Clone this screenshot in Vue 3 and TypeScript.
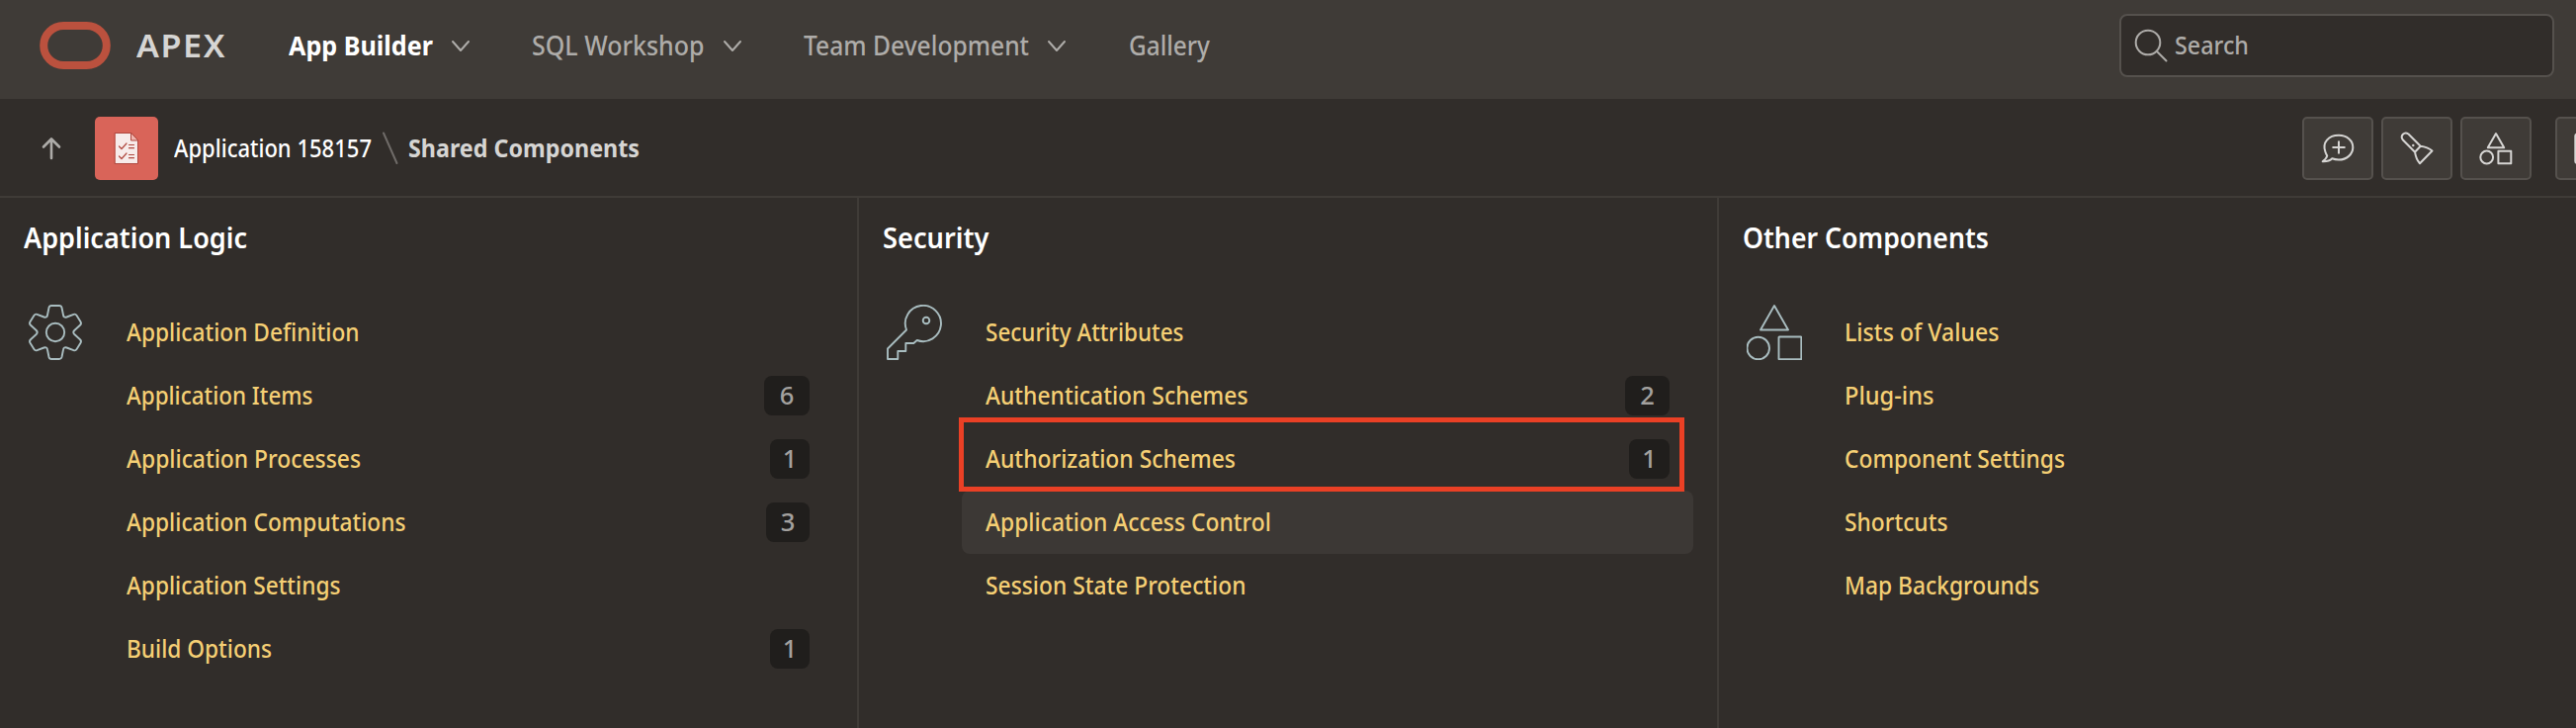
<script setup lang="ts">
interface Label { text: string; width: number }
interface NavItem extends Label { menu: boolean; active?: boolean }
interface LinkItem extends Label { count?: number; badge?: number; marked?: boolean; hovered?: boolean }
interface Section extends Label { icon: 'gear' | 'key' | 'shapes'; links: LinkItem[] }

// Condenses a label horizontally so that it fills the given width.
const vFit = {
  mounted(el: HTMLElement, binding: { value: number }) {
    const natural = el.getBoundingClientRect().width
    el.style.width = `${binding.value}px`
    el.style.transform = `scaleX(${binding.value / natural})`
  },
}

const nav: NavItem[] = [
  { text: 'App Builder', width: 146, menu: true, active: true },
  { text: 'SQL Workshop', width: 174.5, menu: true },
  { text: 'Team Development', width: 228, menu: true },
  { text: 'Gallery', width: 82, menu: false },
]

const sections: Section[] = [
  {
    text: 'Application Logic', width: 226, icon: 'gear',
    links: [
      { text: 'Application Definition', width: 235.5 },
      { text: 'Application Items', width: 188.5, count: 6, badge: 46 },
      { text: 'Application Processes', width: 237, count: 1, badge: 40 },
      { text: 'Application Computations', width: 282.5, count: 3, badge: 44 },
      { text: 'Application Settings', width: 216.5 },
      { text: 'Build Options', width: 147, count: 1, badge: 40 },
    ],
  },
  {
    text: 'Security', width: 107.5, icon: 'key',
    links: [
      { text: 'Security Attributes', width: 200.5 },
      { text: 'Authentication Schemes', width: 265.5, count: 2, badge: 45 },
      { text: 'Authorization Schemes', width: 253, count: 1, badge: 41, marked: true },
      { text: 'Application Access Control', width: 289, hovered: true },
      { text: 'Session State Protection', width: 263.5 },
    ],
  },
  {
    text: 'Other Components', width: 249, icon: 'shapes',
    links: [
      { text: 'Lists of Values', width: 156.5 },
      { text: 'Plug-ins', width: 90.5 },
      { text: 'Component Settings', width: 223 },
      { text: 'Shortcuts', width: 104.5 },
      { text: 'Map Backgrounds', width: 197 },
    ],
  },
]
</script>

<template>
  <div class="page">
    <header class="header">
      <svg class="logo" width="72" height="48" viewBox="0 0 72 48"><rect x="4.200" y="4" width="63.600" height="40" rx="20" /></svg>
      <span class="brand"><span v-fit="91" class="fit">APEX</span></span>
      <nav class="nav">
        <a v-for="item in nav" :key="item.text" class="nav-item" :class="{ active: item.active }">
          <span v-fit="item.width" class="fit">{{ item.text }}</span>
          <svg v-if="item.menu" class="chevron" width="20" height="14" viewBox="0 0 20 14"><path d="M2 2l8 9 8-9" /></svg>
        </a>
      </nav>
      <div class="search">
        <svg width="36" height="36" viewBox="0 0 36 36"><circle cx="15" cy="15" r="12.3" /><path d="M24 24l9.5 9.5" /></svg>
        <span v-fit="75" class="fit">Search</span>
      </div>
    </header>

    <div class="bar">
      <svg class="up" width="22" height="24" viewBox="0 0 22 24"><path d="M11 22V3M3 10.5L11 2.5l8 8" /></svg>
      <div class="tile">
        <svg width="64" height="64" viewBox="0 0 64 64">
          <path class="sheet" d="M20.500 16.500H36.500L43.500 24V47.500H20.500Z" />
          <path class="fold" d="M36.500 16.500V24H43.500Z" />
          <path class="ticks" d="M24.500 30l2.500 2.500 5-5.500M24.500 40l2.500 2.500 5-5.500M34.500 28.500h5M34.500 31.700h5M34.500 38.500h5M34.500 41.700h5" />
        </svg>
      </div>
      <span class="crumb"><span v-fit="200" class="fit">Application 158157</span></span>
      <svg class="slash" width="18" height="34" viewBox="0 0 18 34"><path d="M2 1.500L15.500 32" /></svg>
      <span class="crumb current"><span v-fit="234" class="fit">Shared Components</span></span>
      <div class="tools">
        <button class="tool">
          <svg width="72" height="64" viewBox="0 0 72 64"><path d="M23.400 35.500C20 26 26.500 18.800 37 18.800C45 18.800 51.300 24 51.300 31S45 43.500 37 43.500C34.500 43.500 32.500 43.200 30.300 42.300C28 44.600 25 45.500 20.700 45.300C23.500 43 24.900 41 25.200 39.600C24.300 38 23.900 37 23.400 35.500ZM37 25.300v11.500M31.200 31h11.600" /></svg>
        </button>
        <button class="tool">
          <svg width="72" height="64" viewBox="0 0 72 64"><path d="M34 35.700L21.700 23.300C18.800 19 23.300 14.800 27.500 17.500L39.700 29.700ZM39.700 29.700C44 30.200 48 31.500 51.500 34.500L39 47.300C35.500 43.500 34.600 39.500 34 35.700" /><circle class="dot" cx="32.300" cy="29" r="1.200" /></svg>
        </button>
        <button class="tool">
          <svg width="72" height="64" viewBox="0 0 72 64"><path d="M36 17l8.200 14.300H27.800ZM38.400 34.700h12.900v12.600H38.400Z" /><circle cx="26.700" cy="41" r="6.400" /></svg>
        </button>
        <button class="tool last">
          <svg width="72" height="64" viewBox="0 0 72 64"><rect x="20.300" y="17.500" width="32" height="29.500" rx="2" /></svg>
        </button>
      </div>
    </div>

    <main class="columns">
      <section v-for="section in sections" :key="section.text" class="column">
        <h2 class="title"><span v-fit="section.width" class="fit">{{ section.text }}</span></h2>
        <div class="body">
          <svg class="icon" width="56" height="56" viewBox="0 0 56 56">
            <template v-if="section.icon === 'gear'">
              <path d="M24 1H32Q34 1 34.500 3L36 10.500Q36.500 13.500 39.500 12.500L46.500 9.800Q48.500 9.200 49.600 11L53.500 17.200Q54.700 19.200 53 20.800L47.300 26Q45.300 28 47.300 30L53 35.200Q54.700 36.800 53.500 38.800L49.600 45Q48.500 46.800 46.500 46.200L39.500 43.500Q36.500 42.500 36 45.500L34.500 53Q34 55 32 55H24Q22 55 21.500 53L20 45.500Q19.500 42.500 16.500 43.500L9.500 46.200Q7.500 46.800 6.400 45L2.500 38.800Q1.300 36.800 3 35.200L8.700 30Q10.700 28 8.700 26L3 20.800Q1.300 19.200 2.500 17.200L6.400 11Q7.500 9.200 9.500 9.800L16.500 12.500Q19.500 13.500 20 10.500L21.500 3Q22 1 24 1Z" />
              <circle cx="28" cy="28" r="9.200" />
            </template>
            <template v-if="section.icon === 'key'">
              <path d="M20 25.500A18.100 18.100 0 1 1 30.700 36L27.300 39H19.300V47H11.300V55H1V44.500Z" />
              <circle cx="40" cy="16" r="3.300" />
            </template>
            <template v-if="section.icon === 'shapes'">
              <path d="M28 1l14 24.500H14Z" />
              <circle cx="11.700" cy="44" r="11.300" />
              <rect x="32.500" y="32.500" width="22.800" height="22.800" rx=".6" />
            </template>
          </svg>
          <ul class="links">
            <li v-for="link in section.links" :key="link.text" class="link" :class="{ hovered: link.hovered }">
              <a v-fit="link.width" class="fit">{{ link.text }}</a>
              <span v-if="link.count" class="badge" :style="{ width: link.badge + 'px' }">{{ link.count }}</span>
              <span v-if="link.marked" class="mark"></span>
            </li>
          </ul>
        </div>
      </section>
    </main>
  </div>
</template>

<style>
body { margin: 0; background: #312d2a; }
</style>

<style scoped>
.page { width: 2606px; height: 736px; overflow: hidden; background: #312d2a; color: #fff; font: 480 25.5px/36px "Noto Sans", sans-serif; display: flex; flex-direction: column; }
.page * { box-sizing: border-box; }
svg { fill: none; flex: none; display: block; stroke-linecap: round; stroke-linejoin: round; }
.fit { display: inline-block; white-space: nowrap; transform-origin: 0 50%; flex: none; }
.header { height: 100px; flex: none; background: #3f3b37; display: flex; align-items: flex-start; padding: 14px 22px 0 40px; }
.logo { margin-top: 8px; stroke: #bb513e; stroke-width: 8; }
.brand { margin: 14px 0 0 26px; width: 92px; font-size: 32.5px; font-weight: 600; letter-spacing: 1.5px; color: #d6d5d3; }
.nav { display: flex; margin-left: 62px; gap: 62.4px; padding-top: 14px; color: #aeaca9; }
.nav-item { display: flex; font-size: 26.5px; }
.nav-item.active { color: #fff; font-weight: 700; }
.nav-item .chevron { margin: 12px 0 0 18px; stroke: #aeaca9; stroke-width: 2; }
.search { margin-left: auto; width: 440px; height: 64px; border: 2px solid #55514d; border-radius: 8px; background: #312d2a; display: flex; align-items: center; padding-left: 12px; color: #aeaca9; }
.search svg { stroke: #aeaca9; stroke-width: 2; }
.search .fit { margin-left: 6px; margin-top: -3px; }
.bar { height: 100px; flex: none; border-bottom: 2px solid #3f3b37; display: flex; align-items: center; padding-left: 41px; }
.up { stroke: #aeaca9; stroke-width: 2.6; margin-top: 2px; }
.tile { margin: 2px 16px 0 33px; width: 64px; height: 64px; border-radius: 5px; background: #d96459; flex: none; }
.sheet { fill: #f7ebea; stroke: #b0483f; stroke-width: 1; }
.fold { fill: #f0b5af; stroke: #b0483f; stroke-width: 1; }
.ticks { stroke: #b0483f; stroke-width: 1.2; }
.slash { margin: 1px 8px 0 10px; stroke: #6f6b68; stroke-width: 2; }
.crumb { font-size: 25.5px; }
.current { margin-left: 1px; color: #d6d5d3; font-weight: 700; }
.tools { margin-left: auto; display: flex; gap: 8px; margin-top: 2px; width: 277px; flex: none; }
.tool { width: 72px; height: 64px; flex: none; padding: 0; border: 2px solid #55514d; border-radius: 5px; background: #3f3b37; }
.tool svg { margin: -2px; stroke: #d6d5d3; stroke-width: 2; }
.tool .dot { fill: #d6d5d3; stroke: none; }
.tool.last { margin-left: 16px; }
.columns { flex: 1; display: grid; grid-template-columns: 869px 870px 867px; }
.column { border-right: 2px solid #3f3b37; padding: 21px 24px 0 24px; }
.column:last-child { border-right: 0; }
.title { margin: 0; font-size: 28px; line-height: 38px; font-weight: 620; }
.body { display: flex; padding-top: 45px; }
.icon { margin: 4px 0 0 4px; stroke: #a9bdc0; stroke-width: 1.9; }
.links { flex: 1; list-style: none; padding: 0; margin: 0 0 0 20px; }
.link { position: relative; height: 64px; padding: 0 24px; display: flex; align-items: center; color: #f5cf74; border-radius: 8px; }
.link > .fit { margin-top: -2px; }
.column:last-child .link { padding-left: 23px; }
.link.hovered { background: #3c3835; }
.column:nth-child(2) .link { width: 740px; }
.badge { margin-left: auto; height: 40px; border-radius: 8px; background: #201e1c; color: #a3a19f; text-align: center; line-height: 39px; }
.mark { position: absolute; left: -3px; top: -10px; width: 734px; height: 75px; border: 5px solid #ea4025; z-index: 1; }
</style>
